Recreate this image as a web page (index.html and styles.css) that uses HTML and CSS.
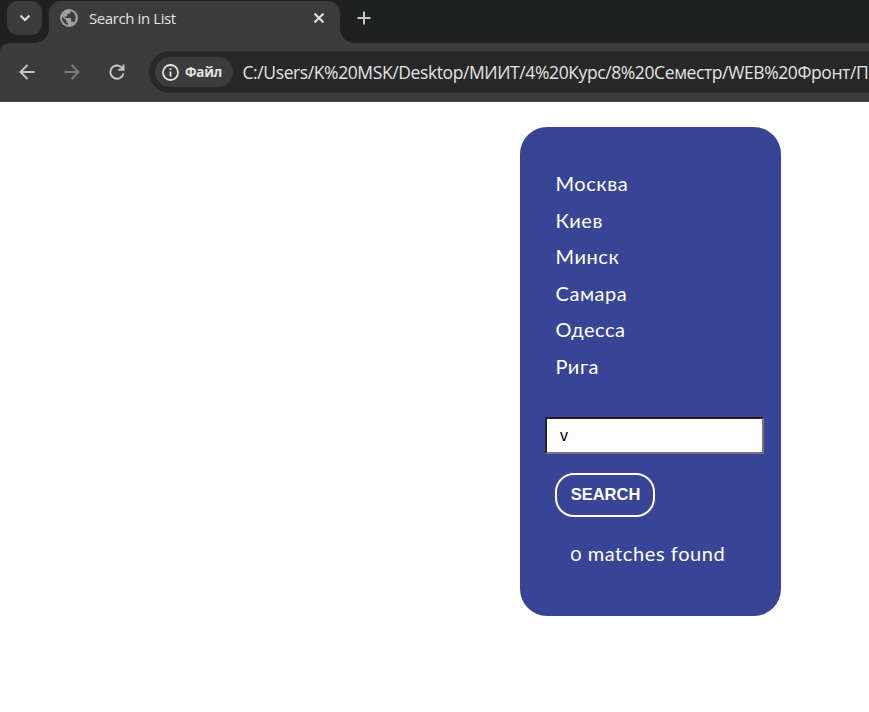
FILE: index.html
```html
<!DOCTYPE html>
<html lang="ru">
<head>
<meta charset="utf-8">
<title>Search in List</title>
<link rel="stylesheet" href="styles.css">
</head>
<body>
<header class="browser">
  <div class="tabs">
    <div class="tab-menu"><svg width="12" height="8" viewBox="0 0 12 8"><path d="M1.500 1.500 6 6l4.500-4.500"/></svg></div>
    <div class="tab">
      <svg class="globe" width="18" height="18" viewBox="0 0 18 18"><circle cx="9" cy="9" r="9"/><path d="M10.500 2v1.300q0 1.500-1.500 1.500H7.300v1.700q0 .9-.9.900H5V9h5q1.100 0 1.100 1.100v2.300h.9q1.200 0 1.600 1.100A6.900 6.900 0 0 0 10.500 2ZM2.200 7.600A6.900 6.900 0 0 0 8 15.900v-1.700q-1.700 0-1.700-1.700v-.9Z"/></svg>
      <span class="tab-title">Search in List</span>
      <svg class="close" width="12" height="12" viewBox="0 0 12 12"><path d="m1.500 1.500 9 9m0-9-9 9"/></svg>
    </div>
    <svg class="plus" width="14" height="14" viewBox="0 0 14 14"><path d="M7 .5v13M.5 7h13"/></svg>
  </div>
  <div class="toolbar">
    <svg class="nav" width="16" height="16" viewBox="0 0 16 16"><path d="M15.500 8H2m6.500-7L1.500 8l7 7"/></svg>
    <svg class="nav nav-off" width="16" height="16" viewBox="0 0 16 16"><path d="M.5 8H14M7.500 1l7 7-7 7"/></svg>
    <svg class="nav" width="16" height="16" viewBox="0 0 16 16"><path d="M13.500 4.500A6.600 6.600 0 1 0 14.400 9.500M14.500 .5v5.200H9.300"/></svg>
    <div class="omnibox">
      <div class="chip">
        <svg width="17" height="17" viewBox="0 0 17 17"><circle cx="8.500" cy="8.500" r="7.500"/><path d="M8.500 7.500v5M8.500 4.200v1.900"/></svg>
        <span>Файл</span>
      </div>
      <span class="url">C:/Users/K%20MSK/Desktop/МИИТ/4%20Курс/8%20Семестр/WEB%20Фронт/П</span>
    </div>
  </div>
</header>
<main class="card">
  <ul class="cities">
    <li>Москва</li>
    <li>Киев</li>
    <li>Минск</li>
    <li>Самара</li>
    <li>Одесса</li>
    <li>Рига</li>
  </ul>
  <input class="query" type="text" value="v">
  <button class="search">SEARCH</button>
  <p class="result"><span class="count">0</span> matches found</p>
</main>
</body>
</html>
```
FILE: styles.css
```css
* { box-sizing: border-box; }
body { margin: 0; background: #fff; overflow: hidden; }
svg { display: block; flex: none; fill: none; }

.browser { height: 102px; background: #1f2120; font-family: "Open Sans", sans-serif; color: #e3e3e3; }
.tabs { display: flex; height: 43px; padding: 1px 0 0 7px; }
.tab-menu { width: 35px; height: 34px; border-radius: 11px; background: #3c3c3c; display: flex; align-items: center; justify-content: center; }
.tab-menu svg, .close, .plus { stroke: #e3e3e3; stroke-width: 2; }
.tab { position: relative; display: flex; align-items: center; width: 291px; height: 42px; margin-left: 7px; padding: 0 15px 7px 11px; border-radius: 12px 12px 0 0; background: #3c3c3c; }
.tab::before, .tab::after { content: ""; position: absolute; bottom: 0; width: 14px; height: 14px; }
.tab::before { left: -14px; background: radial-gradient(circle at 0 0, transparent 13.500px, #3c3c3c 14px); }
.tab::after { right: -14px; background: radial-gradient(circle at 100% 0, transparent 13.500px, #3c3c3c 14px); }
.globe { margin-top: -1px; }
.globe circle { fill: #9aa0a6; }
.globe path { fill: #3c3c3c; }
.tab-title { flex: 1; margin: 0 0 2px 11px; font-size: 15px; letter-spacing: -0.400px; white-space: nowrap; }
.close { margin-top: -1px; }
.plus { margin: 10px 0 0 17px; stroke: #c7c7c7; }

.toolbar { display: flex; align-items: center; height: 59px; padding-left: 18.500px; border-radius: 9px 0 0 0; background: #3c3c3c; border-bottom: 1px solid #474747; }
.nav { margin: 0 29px 1px 0; stroke: #c7c7c7; stroke-width: 1.900; }
.nav-off { stroke: #7c7c7c; }
.omnibox { display: flex; align-items: center; flex: 1; min-width: 0; height: 42px; margin-left: -4.500px; padding-left: 6px; border-radius: 21px 0 0 21px; background: #282828; overflow: hidden; }
.chip { display: flex; flex: none; align-items: center; width: 78px; height: 30px; padding-left: 7px; border-radius: 15px; background: #3c3c3c; font-size: 13.500px; font-weight: 700; letter-spacing: -0.300px; }
.chip svg { stroke: #e3e3e3; stroke-width: 1.800; }
.chip span { margin-left: 6px; }
.url { margin-left: 9.500px; font-size: 17.500px; letter-spacing: -0.400px; white-space: nowrap; }

.card { width: 261px; height: 489px; margin: 25px 0 0 520px; padding: 38px 17px 0 25px; border-radius: 27px; background: #384596; color: #fff; font-family: Lato, sans-serif; font-size: 20px; letter-spacing: 0.550px; }
.cities { margin: 0; padding: 0 0 0 10.500px; list-style: none; line-height: 36.500px; }
.query { display: block; width: 219px; height: 37px; margin-top: 33px; padding: 1px 13px; border: 2px inset #767676; border-radius: 0; background: #fff; color: #000; font: 16px "Liberation Sans", sans-serif; outline: 0; }
.search { display: block; width: 100px; height: 44px; margin: 19px 0 0 10px; padding: 0 0 2px 1px; border: 2px solid #fff; border-radius: 19px; background: none; color: #fff; font: bold 16.500px "Liberation Sans", sans-serif; }
.result { margin: 24px 0 0; padding-left: 25.500px; line-height: 24px; letter-spacing: 0.600px; white-space: nowrap; }
.count { font-variant-numeric: oldstyle-nums; }
```
